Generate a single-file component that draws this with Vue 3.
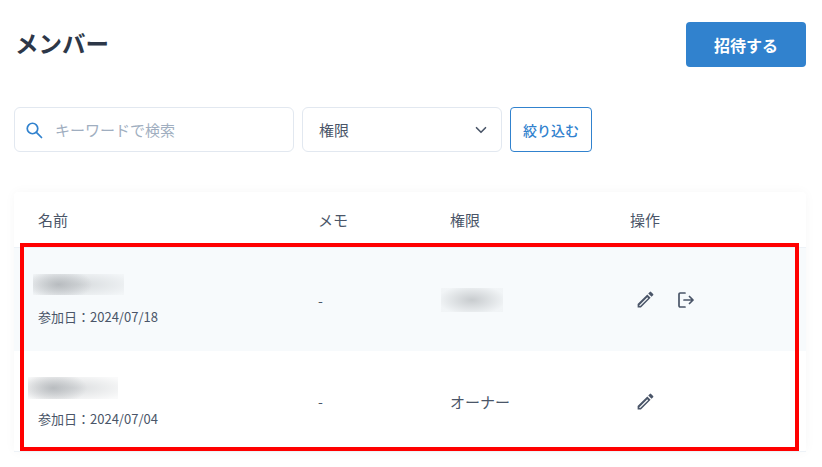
<script setup>
const members = [
  { joined: '2024/07/18', blurW: 91, blurH: 21, gap: 13, blurOffset: -5, role: '', canLeave: true },
  { joined: '2024/07/04', blurW: 90, blurH: 22, gap: 11, blurOffset: -10, role: 'オーナー', canLeave: false },
]
</script>

<template>
  <div class="page">
    <header class="top">
      <h1 class="title">メンバー</h1>
      <button class="invite">招待する</button>
    </header>

    <div class="filters">
      <label class="search">
        <svg class="search-icon" viewBox="0 0 24 24" width="18" height="18" fill="none" stroke="#3182ce" stroke-width="2.3">
          <circle cx="10" cy="10" r="7" />
          <path d="M15.2 15.2 22 22" stroke-linecap="round" />
        </svg>
        <span class="placeholder">キーワードで検索</span>
      </label>
      <div class="select">
        <span>権限</span>
        <svg viewBox="0 0 24 24" width="18" height="18" fill="none" stroke="#4a5568" stroke-width="2.2">
          <path d="M6 9l6 6 6-6" stroke-linecap="round" stroke-linejoin="round" />
        </svg>
      </div>
      <button class="narrow">絞り込む</button>
    </div>

    <section class="card">
      <div class="row head">
        <div>名前</div>
        <div>メモ</div>
        <div>権限</div>
        <div>操作</div>
      </div>
      <div v-for="(m, i) in members" :key="m.joined" class="row body" :class="{ shaded: i === 0 }">
        <div class="name-cell">
          <div
            class="blur-name"
            :style="{ width: m.blurW + 'px', height: m.blurH + 'px', marginLeft: m.blurOffset + 'px', marginBottom: m.gap + 'px' }"
          ></div>
          <div class="joined">参加日：{{ m.joined }}</div>
        </div>
        <div class="memo">-</div>
        <div class="role">
          <div v-if="!m.role" class="blur-role"></div>
          <span v-else>{{ m.role }}</span>
        </div>
        <div class="ops">
          <svg viewBox="0 0 24 24" width="21" height="21" fill="#4a5568" class="edit">
            <path d="M3 17.25V21h3.75L17.81 9.94l-3.75-3.75L3 17.25zM5.92 19.5H5v-.92l9.06-9.06.92.92L5.92 19.5zM20.71 7.04a1 1 0 0 0 0-1.41l-2.34-2.34a1 1 0 0 0-1.41 0l-1.83 1.83 3.75 3.75 1.83-1.83z" />
          </svg>
          <svg v-if="m.canLeave" viewBox="0 0 16 16" width="16" height="16" fill="none" stroke="#4a5568" stroke-width="1.7" class="leave">
            <path d="M7 1H2.2A1.2 1.2 0 0 0 1 2.2v11.6A1.2 1.2 0 0 0 2.2 15H7" stroke-linecap="round" />
            <path d="M6 8h9M11.500 4.500 15 8l-3.500 3.500" stroke-linecap="round" stroke-linejoin="round" />
          </svg>
        </div>
      </div>
    </section>

    <div class="highlight"></div>
  </div>
</template>

<style scoped>
.page {
  position: relative;
  width: 822px;
  height: 467px;
  overflow: hidden;
  box-sizing: border-box;
  padding: 22px 16px 0 14px;
  background: #fff;
  color: #4a5568;
  font-family: "Noto Sans CJK JP", "Noto Sans", sans-serif;
  font-size: 15px;
}
.top {
  display: flex;
  justify-content: space-between;
  align-items: center;
  height: 45px;
}
.title {
  margin: 0 0 3px 1px;
  font-size: 23.5px;
  font-weight: 700;
  line-height: 42px;
  color: #2d3748;
}
.invite {
  width: 120px;
  height: 45px;
  border: 0;
  border-radius: 4px;
  background: #3182ce;
  color: #fff;
  font: 700 16px "Noto Sans CJK JP", sans-serif;
}
.filters {
  display: flex;
  gap: 8px;
  margin-top: 40px;
  height: 45px;
}
.search,
.select {
  display: flex;
  align-items: center;
  box-sizing: border-box;
  height: 45px;
  border: 1px solid #e2e8f0;
  border-radius: 6px;
  background: #fff;
}
.search {
  width: 280px;
  padding-left: 10px;
}
.search-icon {
  flex: none;
}
.placeholder {
  margin-left: 12px;
  color: #a0aec0;
}
.select {
  width: 200px;
  justify-content: space-between;
  padding: 0 11px 0 16px;
}
.narrow {
  box-sizing: border-box;
  width: 82px;
  height: 45px;
  border: 1px solid #3182ce;
  border-radius: 4px;
  background: #fff;
  color: #3182ce;
  font: 500 14px "Noto Sans CJK JP", sans-serif;
}
.card {
  margin-top: 40px;
  width: 792px;
  height: 260px;
  background: #fff;
  box-shadow: 0 0 12px rgba(0, 0, 0, 0.035);
  border-radius: 4px;
}
.row {
  display: grid;
  grid-template-columns: 280px 132px 180px 200px;
  align-items: center;
  box-sizing: border-box;
}
.row > div {
  padding-left: 24px;
}
.head {
  height: 56px;
  padding-bottom: 1px;
  border-bottom: 1px solid #edf2f7;
}
.body {
  height: 103px;
}
.body:last-child {
  height: 101px;
  border-bottom: 1px solid #edf2f7;
}
.shaded {
  background: #f7fafc;
}
.row > .name-cell {
  align-self: start;
  padding-top: 26px;
}
.blur-name {
  background:
    radial-gradient(ellipse 34px 16px at 28% 50%, rgba(170, 174, 178, 0.75), rgba(170, 174, 178, 0) 100%),
    radial-gradient(ellipse 60px 14px at 50% 50%, rgba(190, 194, 197, 0.55), rgba(190, 194, 197, 0.08) 100%);
}
.joined {
  font-size: 13px;
  line-height: 18px;
}
.memo {
  font-size: 14px;
}
.blur-role {
  width: 62px;
  height: 24px;
  margin-left: -9px;
  background: radial-gradient(ellipse 34px 15px at 50% 50%, rgba(180, 184, 187, 0.7), rgba(190, 194, 197, 0.1) 100%);
}
.ops {
  display: flex;
  align-items: center;
}
.edit {
  margin-left: 5px;
}
.leave {
  margin-left: 22px;
}
.highlight {
  position: absolute;
  left: 20px;
  top: 243px;
  width: 771px;
  height: 200px;
  border: 4px solid #f00;
  pointer-events: none;
}
</style>
